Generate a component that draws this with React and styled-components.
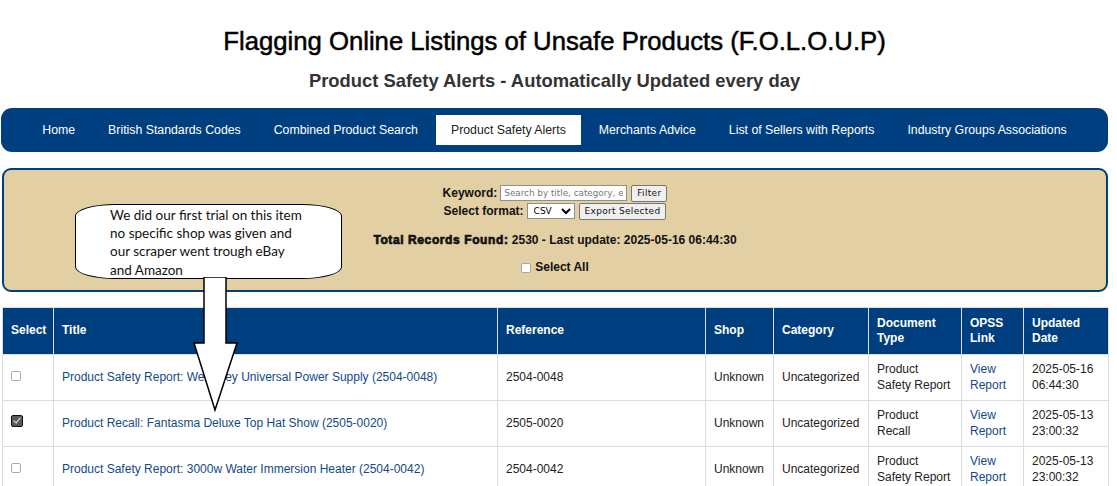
import React from 'react';
import styled, { createGlobalStyle } from 'styled-components';

const GlobalStyle = createGlobalStyle`
    body {
        margin: 0;
        background: #fff;
        font-family: "Liberation Sans", Arial, sans-serif;
        color: #222;
    }
`;

const NAVY = '#003f7f';

const Page = styled.div`
    position: relative;
    width: 1107px;
    padding: 0 9px 0 1px;
`;

const Title = styled.h1`
    margin: 0;
    padding-top: 27px;
    font-size: 25.7px;
    line-height: 28px;
    font-weight: normal;
    -webkit-text-stroke: 0.5px #000;
    text-align: center;
    color: #000;
`;

const Subtitle = styled.h2`
    margin: 16px 0 0;
    font-size: 18.4px;
    line-height: 20px;
    font-weight: bold;
    text-align: center;
    color: #333;
`;

const Nav = styled.nav`
    margin-top: 17px;
    height: 44px;
    background: ${NAVY};
    border-radius: 11px;
    display: flex;
    align-items: center;
    justify-content: center;
`;

const NavItem = styled.a`
    display: block;
    height: 30px;
    line-height: 31px;
    margin: 0 1.5px;
    padding: 0 15px;
    font-size: 12.3px;
    text-decoration: none;
    color: ${({ $active }) => ($active ? '#222' : '#fff')};
    background: ${({ $active }) => ($active ? '#fff' : 'transparent')};
    cursor: pointer;
`;

const Panel = styled.section`
    box-sizing: border-box;
    margin: 16px 0 0 1px;
    height: 124px;
    background: #e2cfa3;
    border: 2px solid ${NAVY};
    border-radius: 9px;
    display: flex;
    flex-direction: column;
    align-items: center;
    padding-top: 14px;
    font-size: 12px;
`;

const FormRow = styled.div`
    height: 18px;
    display: flex;
    align-items: center;
    gap: 3px;
`;

const Label = styled.label`
    font-weight: bold;
    color: #111;
`;

const SearchInput = styled.input`
    width: 127px;
    height: 16px;
    box-sizing: border-box;
    border: 1px solid #8f8f8f;
    padding: 0 3px;
    font-family: "DejaVu Sans", sans-serif;
    font-size: 8.8px;
    color: #555;
    &::placeholder { color: #777; }
`;

const FormatSelect = styled.select`
    width: 48px;
    height: 16px;
    box-sizing: border-box;
    border: 1px solid #8f8f8f;
    font-family: "DejaVu Sans", sans-serif;
    font-size: 9px;
    padding: 0 0 0 2px;
    background: #fff;
`;

const SmallButton = styled.button`
    height: 17px;
    box-sizing: border-box;
    margin-left: 1px;
    padding: 0 5px;
    border: 1px solid #767676;
    border-radius: 2px;
    background: #efefef;
    font-family: "DejaVu Sans", sans-serif;
    font-size: 9px;
    letter-spacing: 0.3px;
    color: #111;
`;

const Records = styled.div`
    margin-top: 13px;
    line-height: 15px;
    font-weight: bold;
    color: #111;
`;

const Heavy = styled.span`
    font-weight: 900;
    -webkit-text-stroke: 0.7px #111;
    letter-spacing: 0.6px;
`;

const SelectAll = styled.label`
    margin-top: 12px;
    display: flex;
    align-items: center;
    gap: 4px;
    font-weight: bold;
    color: #111;
    line-height: 15px;
`;

const Box = styled.input.attrs({ type: 'checkbox' })`
    appearance: none;
    margin: 0;
    width: 10px;
    height: 10px;
    border: 1px solid #aaa;
    border-radius: 2px;
    background: #fff;
    position: relative;
    &:checked {
        width: 12px;
        height: 12px;
        background: #5a5a5a;
        border-color: #111;
    }
    &:checked::after {
        content: '';
        position: absolute;
        left: 3px;
        top: 0px;
        width: 3px;
        height: 6px;
        border: solid #e8e8e8;
        border-width: 0 1px 1px 0;
        transform: rotate(40deg);
    }
`;

const Table = styled.table`
    margin: 15px 0 0 1px;
    width: 1106px;
    border-collapse: collapse;
    table-layout: fixed;
    font-size: 12px;
`;

const Th = styled.th`
    background: ${NAVY};
    color: #fff;
    text-align: left;
    font-weight: bold;
    padding: 7px 8px;
    height: 32px;
    line-height: 15.5px;
    border: 1px solid #ddd;
`;

const Td = styled.td`
    padding: 7px 8px;
    height: 31px;
    line-height: 15.5px;
    border: 1px solid #ddd;
    color: #222;
    vertical-align: middle;
`;

const Link = styled.a`
    color: #12498a;
    text-decoration: none;
`;

const Callout = styled.div`
    position: absolute;
    left: 75px;
    top: 204px;
    width: 196px;
    height: 72px;
    padding: 1px 35px 0 34px;
    background: #fff;
    border: 1px solid #000;
    border-radius: 40px / 12px;
    font-family: Lato, "Open Sans", sans-serif;
    font-size: 13.5px;
    line-height: 18.2px;
    color: #111;
    z-index: 2;
`;

const Arrow = styled.svg`
    position: absolute;
    left: 190px;
    top: 277px;
    z-index: 2;
`;

const columns = [
    { label: 'Select', width: 51 },
    { label: 'Title', width: 444 },
    { label: 'Reference', width: 208 },
    { label: 'Shop', width: 68 },
    { label: 'Category', width: 95 },
    { label: 'Document Type', width: 93 },
    { label: 'OPSS Link', width: 62 },
    { label: 'Updated Date', width: 85 },
];

const rows = [
    {
        title: 'Product Safety Report: Wellesley Universal Power Supply (2504-0048)',
        ref: '2504-0048',
        doc: 'Product Safety Report',
        date: '2025-05-16 06:44:30',
        checked: false,
    },
    {
        title: 'Product Recall: Fantasma Deluxe Top Hat Show (2505-0020)',
        ref: '2505-0020',
        doc: 'Product Recall',
        date: '2025-05-13 23:00:32',
        checked: true,
    },
    {
        title: 'Product Safety Report: 3000w Water Immersion Heater (2504-0042)',
        ref: '2504-0042',
        doc: 'Product Safety Report',
        date: '2025-05-13 23:00:32',
        checked: false,
    },
];

const navLinks = [
    'Home',
    'British Standards Codes',
    'Combined Product Search',
    'Product Safety Alerts',
    'Merchants Advice',
    'List of Sellers with Reports',
    'Industry Groups Associations',
];

export default function App() {
    return (
        <Page>
            <GlobalStyle />
            <Title>Flagging Online Listings of Unsafe Products (F.O.L.O.U.P)</Title>
            <Subtitle>Product Safety Alerts - Automatically Updated every day</Subtitle>

            <Nav>
                {navLinks.map((name) => (
                    <NavItem key={name} $active={name === 'Product Safety Alerts'}>{name}</NavItem>
                ))}
            </Nav>

            <Panel>
                <FormRow>
                    <Label>Keyword:</Label>
                    <SearchInput placeholder="Search by title, category, etc" />
                    <SmallButton>Filter</SmallButton>
                </FormRow>
                <FormRow>
                    <Label>Select format:</Label>
                    <FormatSelect defaultValue="csv">
                        <option value="csv">CSV</option>
                    </FormatSelect>
                    <SmallButton>Export Selected</SmallButton>
                </FormRow>
                <Records>
                    <Heavy>Total Records Found:</Heavy> 2530 - Last update: 2025-05-16 06:44:30
                </Records>
                <SelectAll>
                    <Box />
                    Select All
                </SelectAll>
            </Panel>

            <Table>
                <colgroup>
                    {columns.map((c) => <col key={c.label} style={{ width: c.width }} />)}
                </colgroup>
                <thead>
                    <tr>
                        {columns.map((c) => <Th key={c.label}>{c.label}</Th>)}
                    </tr>
                </thead>
                <tbody>
                    {rows.map((r) => (
                        <tr key={r.ref}>
                            <Td><Box defaultChecked={r.checked} /></Td>
                            <Td><Link>{r.title}</Link></Td>
                            <Td>{r.ref}</Td>
                            <Td>Unknown</Td>
                            <Td>Uncategorized</Td>
                            <Td>{r.doc}</Td>
                            <Td><Link>View Report</Link></Td>
                            <Td>{r.date}</Td>
                        </tr>
                    ))}
                </tbody>
            </Table>

            <Callout>
                We did our first trial on this item no specific shop was given and our scraper went trough eBay and Amazon
            </Callout>
            <Arrow width="50" height="136" viewBox="0 0 50 136">
                <polygon
                    points="14,0 36,0 36,66 47,66 25,133 4,66 14,66"
                    fill="#fff"
                    stroke="#000"
                    strokeWidth="1.5"
                />
            </Arrow>
        </Page>
    );
}
